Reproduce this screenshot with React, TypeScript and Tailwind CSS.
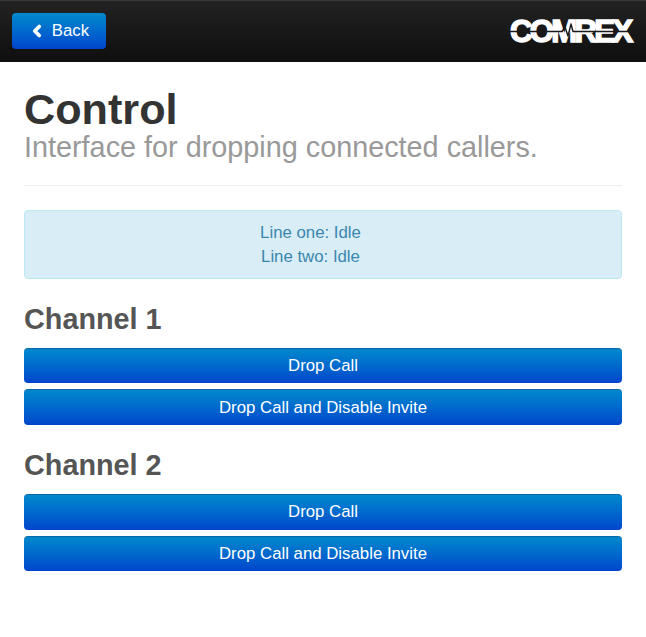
import { ChevronLeft } from 'lucide-react';

function DropButton({ label }: { label: string }) {
  return (
    <button className="block w-full h-[35.5px] rounded-[4px] border-t border-[#0a68a8] bg-gradient-to-b from-[#0088cc] to-[#0044cc] text-white text-[16.8px] leading-[34px]">
      {label}
    </button>
  );
}

function Channel({ name }: { name: string }) {
  return (
    <section>
      <h2 className="text-[28.8px] leading-[31.6px] font-bold text-[#555555]">{name}</h2>
      <div className="flex flex-col gap-[6px] mt-[12.4px]">
        <DropButton label="Drop Call" />
        <DropButton label="Drop Call and Disable Invite" />
      </div>
    </section>
  );
}

function Logo() {
  return (
    <div className="relative w-[124px] h-[24px] mt-[1px]">
      <span className="block whitespace-nowrap text-white font-bold text-[31px] leading-[24px] tracking-[-2.6px] [-webkit-text-stroke:1.5px_white]">
        COMREX
      </span>
      {/* linha e pulso do logo */}
      <svg className="absolute left-0 top-0" width="124" height="24" viewBox="0 0 124 24" fill="none">
        <path
          d="M0 11.5H52L55 7L58 16L61 4L63 11.5H124"
          stroke="#1a1a1a"
          strokeWidth="1.4"
          strokeLinejoin="round"
        />
      </svg>
    </div>
  );
}

export default function App() {
  return (
    <div className="w-[646px] h-[637px] bg-white font-['Liberation_Sans',Arial,sans-serif]">
      {/* Barra superior */}
      <header className="h-[62px] flex items-center justify-between px-[12px] bg-gradient-to-b from-[#222222] to-[#0f0f0f] border-t border-[#3a3632]">
        <button className="w-[94px] h-[36px] -mt-[1px] pr-[1px] flex items-center justify-center gap-[6px] rounded-[4px] bg-gradient-to-b from-[#0088cc] to-[#0044cc] text-white text-[16.8px]">
          <ChevronLeft size={18} strokeWidth={5} />
          Back
        </button>
        <Logo />
      </header>

      <main className="px-[24px]">
        <div className="pt-[25px] pb-[22px] border-b border-[#eeeeee]">
          <h1 className="text-[43.2px] leading-[44px] font-bold text-[#333333]">Control</h1>
          <p className="text-[28.8px] leading-[32px] text-[#999999]">
            Interface for dropping connected callers.
          </p>
        </div>

        <div className="mt-[24px] h-[69px] py-[10px] rounded-[4px] border border-[#bce8f1] bg-[#d9edf7] text-center text-[#3a87ad] text-[16.8px] leading-[24px]">
          <p className="-ml-[25px]">Line one: Idle</p>
          <p className="-ml-[25px]">Line two: Idle</p>
        </div>

        <div className="flex flex-col gap-[25.4px] mt-[24.8px]">
          <Channel name="Channel 1" />
          <Channel name="Channel 2" />
        </div>
      </main>
    </div>
  );
}
